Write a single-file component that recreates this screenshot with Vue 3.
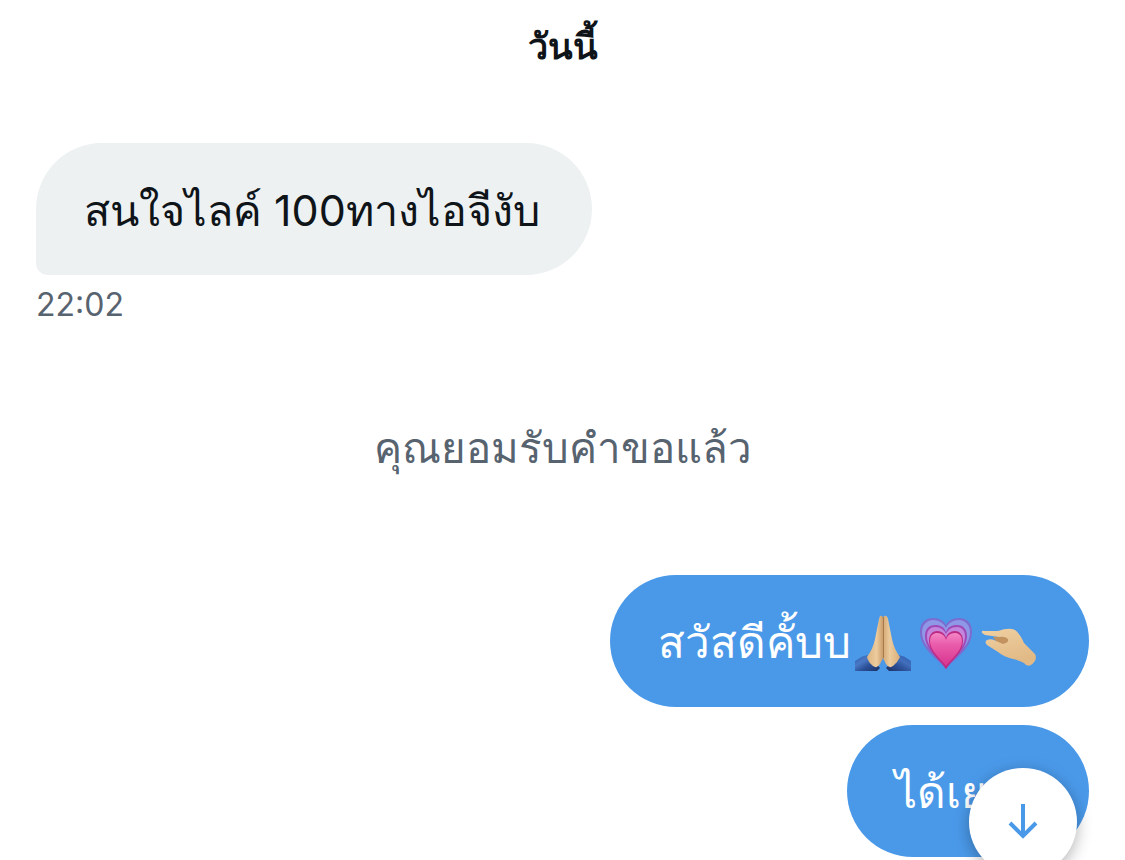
<script setup>
const dayLabel = 'วันนี้'
const incoming = { text: 'สนใจไลค์ 100ทางไอจีงับ', time: '22:02' }
const notice = 'คุณยอมรับคำขอแล้ว'
const greeting = 'สวัสดีคั้บบ'
const reply = 'ได้เยอะ'
</script>

<template>
  <main class="chat">
    <h2 class="day">{{ dayLabel }}</h2>

    <article class="message received">
      <p class="bubble bubble-in">{{ incoming.text }}</p>
      <time class="time">{{ incoming.time }}</time>
    </article>

    <p class="notice">{{ notice }}</p>

    <section class="sent-group">
      <p class="bubble bubble-out">
        <span>{{ greeting }}</span>
        <svg class="emoji" viewBox="0 0 56 60" role="img" aria-label="🙏🏼">
          <defs>
            <linearGradient id="skinL" x1="0" x2="1">
              <stop offset="0" stop-color="#dcb581" /><stop offset=".6" stop-color="#eccb9d" /><stop offset="1" stop-color="#cb9d6a" />
            </linearGradient>
            <linearGradient id="skinR" x1="0" x2="1">
              <stop offset="0" stop-color="#d3a875" /><stop offset=".4" stop-color="#eccb9d" /><stop offset="1" stop-color="#d8ae78" />
            </linearGradient>
            <linearGradient id="sleeveL" x1="0" y1="0" x2="1" y2="1">
              <stop offset="0" stop-color="#2a5cb0" /><stop offset=".35" stop-color="#4a78c4" /><stop offset=".6" stop-color="#2c5199" /><stop offset="1" stop-color="#1c2f62" />
            </linearGradient>
            <linearGradient id="sleeveR" x1="1" y1="0" x2="0" y2="1">
              <stop offset="0" stop-color="#2a5cb0" /><stop offset=".35" stop-color="#426fbc" /><stop offset=".6" stop-color="#2c5199" /><stop offset="1" stop-color="#1c2f62" />
            </linearGradient>
          </defs>
          <path fill="url(#sleeveL)" d="M0 49 Q8 43 14 43 L25 56 L22 59 H0Z" />
          <path fill="url(#sleeveR)" d="M56 49 Q48 43 43 43 L31 56 L34 59 H56Z" />
          <path fill="url(#skinL)" d="M25 4 Q28 3 28 7 V46 L25 52 Q22 57 18 54 Q13 50 12 45 Q18 37 20 27 L24 7Z" />
          <path fill="url(#skinR)" d="M29 4 Q32 3 33 7 L37 27 Q39 37 45 45 Q43 50 38 54 Q34 57 31 52 L28 46 V7Z" />
          <path fill="none" stroke="#a87b4c" stroke-width="1" d="M28.5 5 V46" />
        </svg>
        <svg class="emoji" viewBox="0 0 56 60" role="img" aria-label="💗">
          <defs>
            <linearGradient id="heartCore" x2="0" y2="1">
              <stop offset="0" stop-color="#f487c6" /><stop offset=".35" stop-color="#ea5cab" /><stop offset="1" stop-color="#d8358f" />
            </linearGradient>
          </defs>
          <path fill="#7c6cd0" d="M28 57 C20 47 2 37 2 20 C2 10 8 6 15 6 C22 6 26 9 28 13 C30 9 34 6 41 6 C48 6 54 10 54 20 C54 37 36 47 28 57Z" />
          <path fill="#8e98e6" d="M28 53 C21 44 4 36 4 20 C4 12 10 8 15 8 C22 8 26 12 28 16 C30 12 34 8 41 8 C46 8 52 12 52 20 C52 36 35 44 28 53Z" />
          <path fill="#a04ab8" d="M28 57 C21 46 7 38 7 24 C7 16 12 13 17 13 C23 13 26 15 28 20 C30 15 33 13 39 13 C44 13 49 16 49 24 C49 38 35 46 28 57Z" />
          <path fill="#c286dc" d="M28 54 C21 44 9 37 9 24 C9 18 13 15 17 15 C23 15 26 18 28 22 C30 18 33 15 39 15 C43 15 47 18 47 24 C47 37 35 44 28 54Z" />
          <path fill="#bd2a82" d="M28 57 C22 47 11 41 11 29 C11 22 15 19 19 19 C24 19 27 22 28 26 C29 22 32 19 37 19 C41 19 45 22 45 29 C45 41 34 47 28 57Z" />
          <path fill="url(#heartCore)" d="M28 54 C22 46 12 39 12 29 C12 23 16 21 19 21 C24 21 27 24 28 28 C29 24 32 21 37 21 C40 21 44 23 44 29 C44 39 34 46 28 54Z" />
        </svg>
        <svg class="emoji" viewBox="0 0 56 60" role="img" aria-label="🤏🏼">
          <defs>
            <linearGradient id="pinch" x2=".4" y2="1">
              <stop offset="0" stop-color="#f0d0a2" /><stop offset="1" stop-color="#e0b985" />
            </linearGradient>
          </defs>
          <path fill="#c2935e" d="M12 25 L28 24 L30 33 L17 32Z" />
          <path fill="url(#pinch)" d="M1 21 Q0 18 4 19 L17 19 Q28 15 34 18 Q39 22 43 31 L54 42 Q57 48 50 53 Q46 55 43 51 Q38 48 32 47 Q23 45 17 40 L6 33 Q3 30 6 28 Q11 26 15 29 L22 32 Q28 31 27 27 Q24 24 18 25 L4 23Z" />
        </svg>
      </p>
      <p class="bubble bubble-out">{{ reply }}</p>
    </section>

    <button class="scroll-down" type="button" aria-label="เลื่อนลง">
      <svg viewBox="0 0 32 36" aria-hidden="true">
        <path d="M16 0 V32 M3 19 L16 32 L29 19" />
      </svg>
    </button>
  </main>
</template>

<style>
body {
  margin: 0;
  background: #fff;
}
</style>

<style scoped>
.chat {
  box-sizing: border-box;
  min-height: 100vh;
  padding: 16px 36px 0;
  overflow: hidden;
  color: #0f1419;
  font-family: Inter, "Liberation Sans", sans-serif;
}
.day {
  margin: 0;
  font-size: 36px;
  line-height: 60px;
  font-weight: 700;
  text-align: center;
}
.received {
  display: flex;
  flex-direction: column;
  align-items: flex-start;
  margin-top: 67px;
}
.bubble {
  display: flex;
  align-items: center;
  box-sizing: border-box;
  margin: 0;
  padding: 37px 52px 35px 48px;
  border-radius: 66px;
  font-size: 43px;
  line-height: 60px;
  white-space: nowrap;
}
.bubble-in {
  background: #edf1f2;
  border-bottom-left-radius: 12px;
}
.bubble-out {
  background: #4a99e9;
  color: #fff;
  font-size: 44px;
}
.time {
  margin-top: 8px;
  color: #57636f;
  font-size: 32px;
  line-height: 44px;
}
.notice {
  margin: 91px 0 0;
  color: #57636f;
  font-size: 42px;
  line-height: 60px;
  text-align: center;
}
.sent-group {
  display: flex;
  flex-direction: column;
  align-items: flex-end;
  gap: 18px;
  margin-top: 97px;
}
.emoji {
  width: 56px;
  height: 60px;
  margin-left: 4px;
}
.emoji + .emoji {
  margin-left: 7px;
}
.scroll-down {
  position: fixed;
  right: 48px;
  bottom: -16px;
  display: flex;
  align-items: center;
  justify-content: center;
  width: 108px;
  height: 108px;
  padding: 0;
  border: 0;
  border-radius: 50%;
  background: #fff;
  box-shadow: 0 4px 16px rgba(0, 0, 0, 0.3);
}
.scroll-down svg {
  width: 32px;
  height: 36px;
  fill: none;
  stroke: #4a99e9;
  stroke-width: 4;
}
</style>
